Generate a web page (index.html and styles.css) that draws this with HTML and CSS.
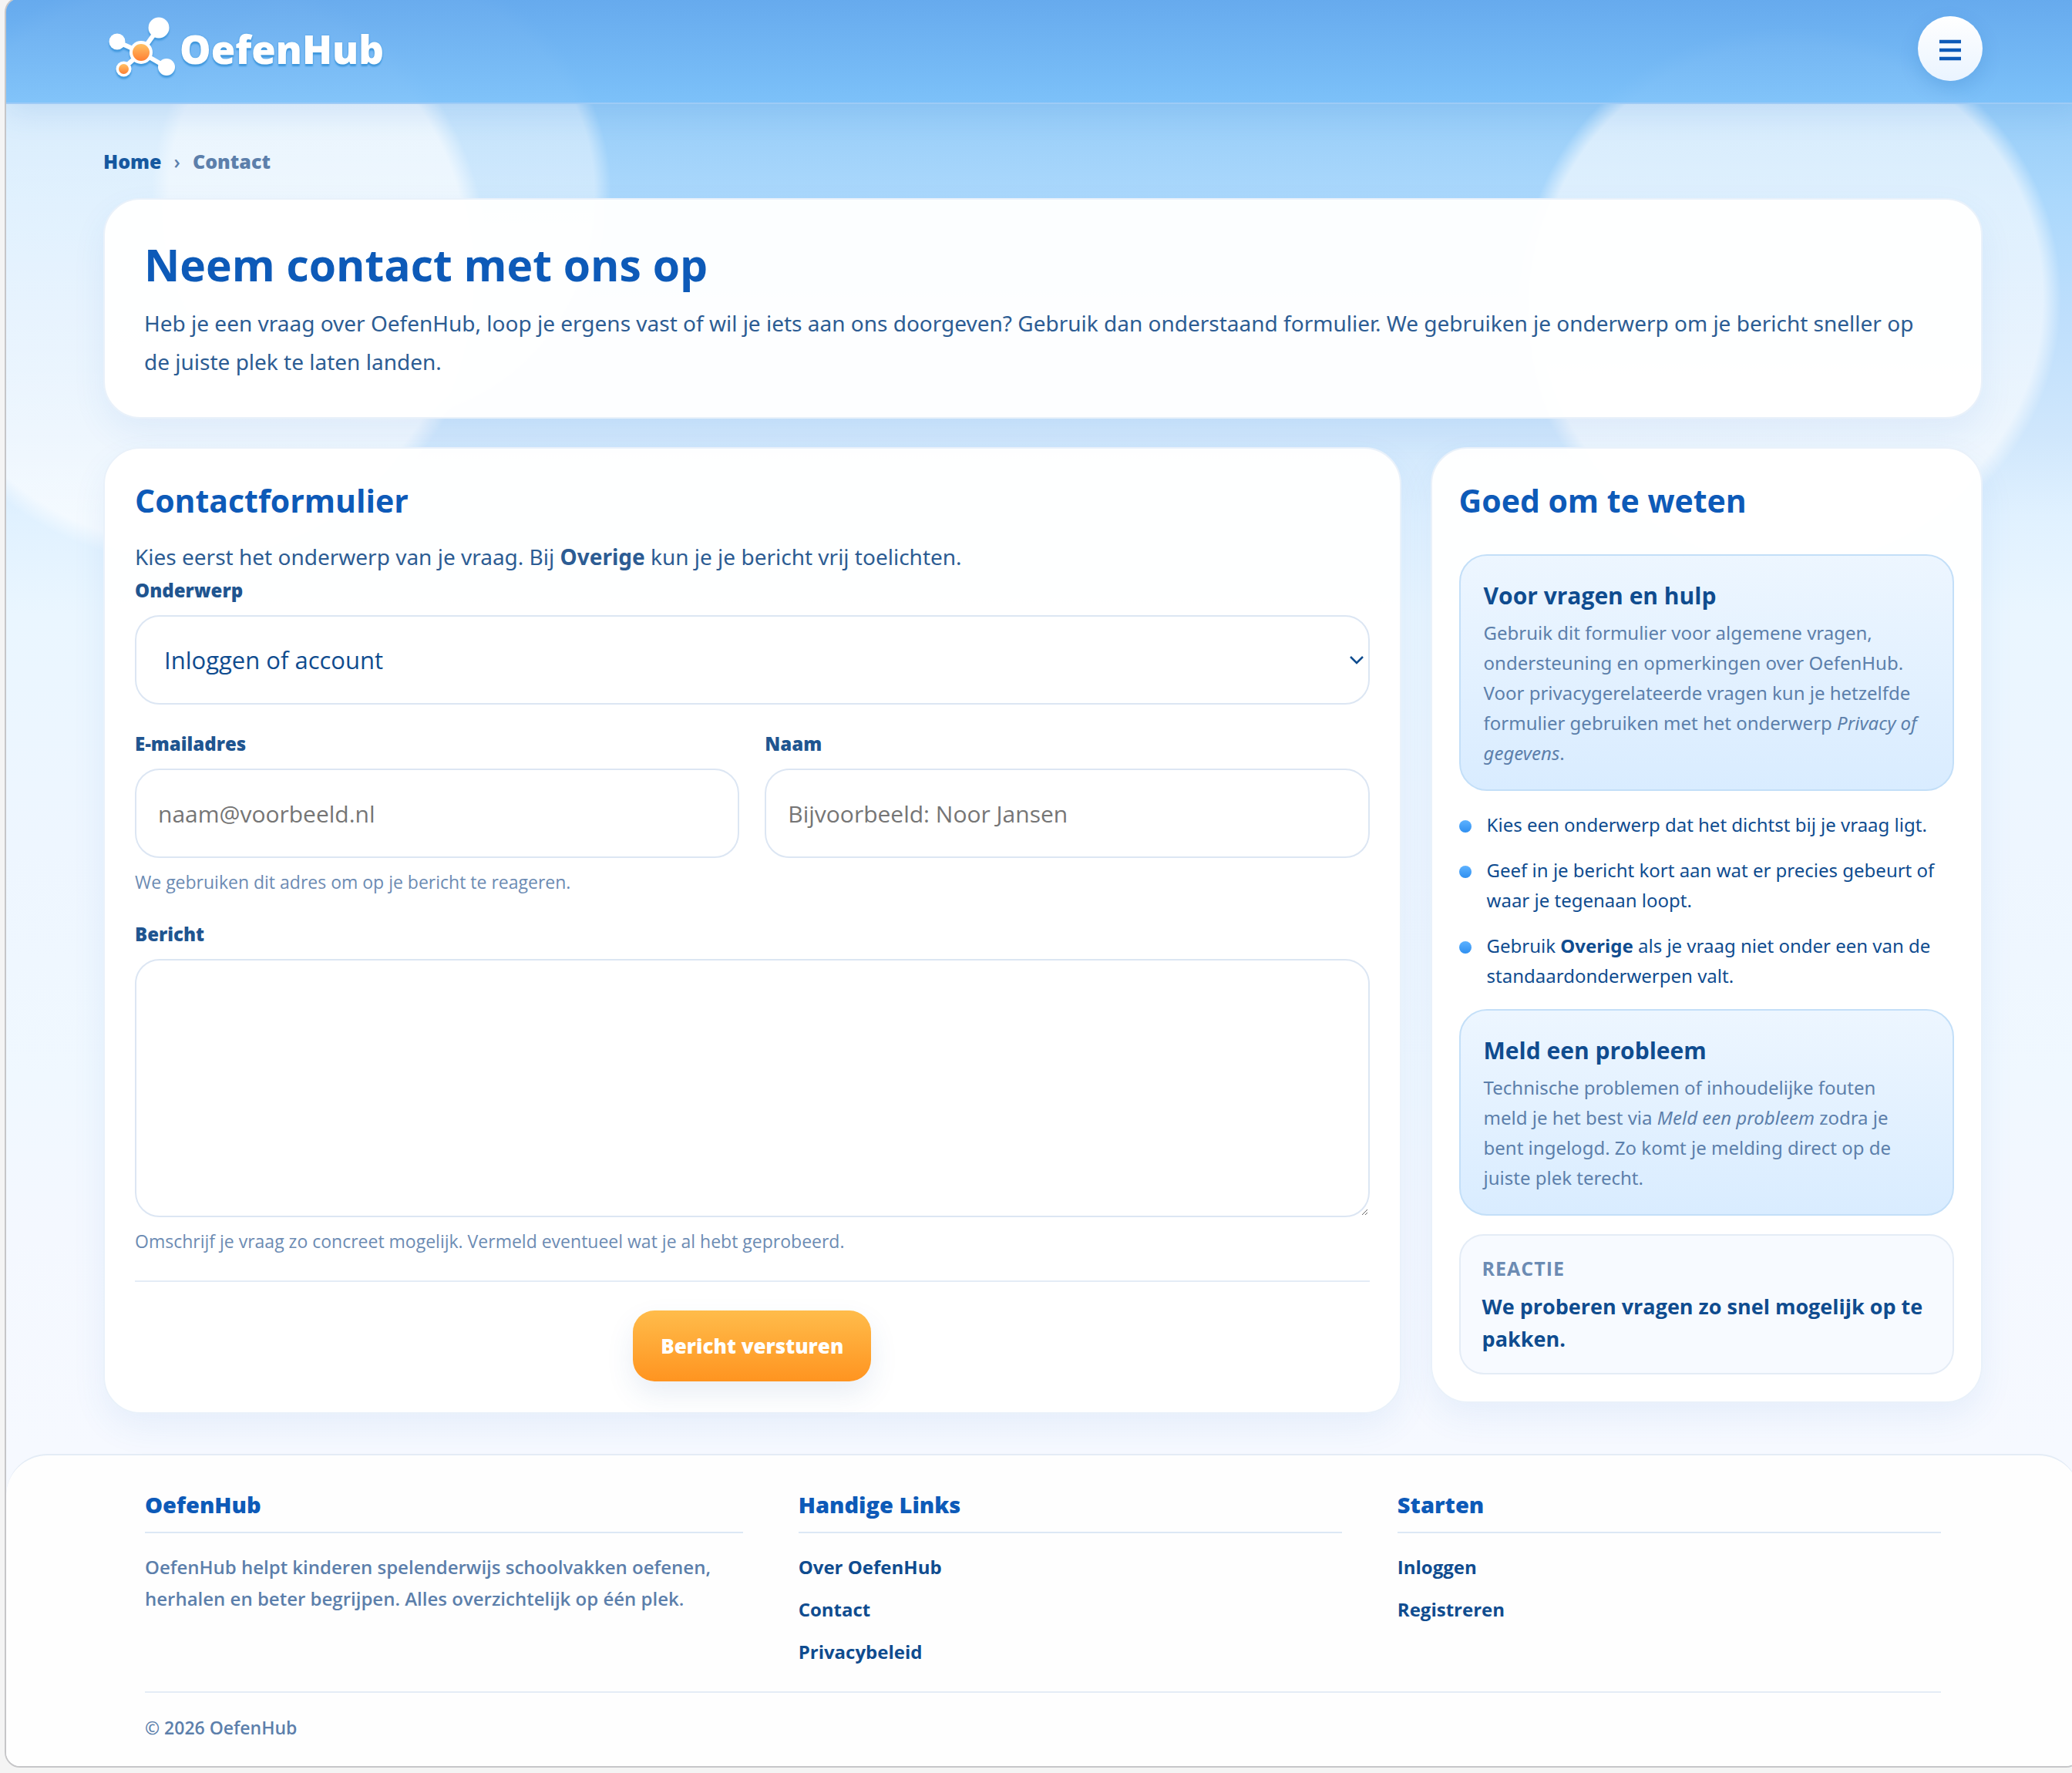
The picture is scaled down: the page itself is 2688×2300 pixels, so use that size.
FILE: index.html
```html
<!DOCTYPE html>
<html lang="nl">
<head>
  <meta charset="utf-8">
  <meta name="viewport" content="width=device-width, initial-scale=1">
  <title>Contact - OefenHub</title>
  <link rel="stylesheet" href="styles.css">
</head>
<body>
  <div class="page">
    <!-- Header with logo and menu button -->
    <header class="site-header">
      <a class="logo" href="#">
        <svg class="logo-mark" viewBox="0 0 90 84" aria-hidden="true">
          <defs>
            <linearGradient id="orange" x1="0" y1="0" x2="0" y2="1">
              <stop offset="0" stop-color="#ffc266"/>
              <stop offset="1" stop-color="#ff7f32"/>
            </linearGradient>
          </defs>
          <g stroke="#fff" stroke-width="6" stroke-linecap="round">
            <path d="M43 47 66 15M43 47 12 33M43 47 76 66M43 47 20 68"/>
          </g>
          <g fill="#fff">
            <circle cx="66" cy="15" r="13.5"/>
            <circle cx="12" cy="33" r="10.5"/>
            <circle cx="76" cy="66" r="11"/>
            <circle cx="20.5" cy="68.5" r="10"/>
            <circle cx="43" cy="47" r="15"/>
          </g>
          <circle cx="43" cy="47" r="11" fill="url(#orange)"/>
          <circle cx="20.5" cy="68.5" r="6.5" fill="url(#orange)"/>
        </svg>
        <span class="logo-text">OefenHub</span>
      </a>
      <button class="menu-btn" type="button" aria-label="Menu openen">
        <svg viewBox="0 0 28 28" aria-hidden="true">
          <path d="M0 5h28M0 16h28M0 27h28" stroke="currentColor" stroke-width="4.5"/>
        </svg>
      </button>
    </header>

    <main class="content">
      <nav class="breadcrumb" aria-label="Kruimelpad">
        <a href="#">Home</a>
        <span class="sep">›</span>
        <span>Contact</span>
      </nav>

      <section class="card hero">
        <h1>Neem contact met ons op</h1>
        <p>Heb je een vraag over OefenHub, loop je ergens vast of wil je iets aan ons doorgeven? Gebruik dan onderstaand formulier. We gebruiken je onderwerp om je bericht sneller op de juiste plek te laten landen.</p>
      </section>

      <div class="columns">
        <!-- Contact form -->
        <section class="card form-card">
          <h2>Contactformulier</h2>
          <p class="intro">Kies eerst het onderwerp van je vraag. Bij <strong>Overige</strong> kun je je bericht vrij toelichten.</p>
          <form>
            <div class="field">
              <label for="subject">Onderwerp</label>
              <select id="subject">
                <option>Inloggen of account</option>
              </select>
            </div>
            <div class="field-row">
              <div class="field">
                <label for="email">E-mailadres</label>
                <input type="email" id="email" placeholder="naam@voorbeeld.nl">
                <p class="hint">We gebruiken dit adres om op je bericht te reageren.</p>
              </div>
              <div class="field">
                <label for="name">Naam</label>
                <input type="text" id="name" placeholder="Bijvoorbeeld: Noor Jansen">
              </div>
            </div>
            <div class="field">
              <label for="message">Bericht</label>
              <textarea id="message"></textarea>
              <p class="hint">Omschrijf je vraag zo concreet mogelijk. Vermeld eventueel wat je al hebt geprobeerd.</p>
            </div>
            <div class="actions">
              <button class="btn-send" type="submit">Bericht versturen</button>
            </div>
          </form>
        </section>

        <!-- Extra info next to the form -->
        <aside class="card side-card">
          <h2>Goed om te weten</h2>
          <div class="info-box">
            <h3>Voor vragen en hulp</h3>
            <p>Gebruik dit formulier voor algemene vragen, ondersteuning en opmerkingen over OefenHub. Voor privacygerelateerde vragen kun je hetzelfde formulier gebruiken met het onderwerp <em>Privacy of gegevens</em>.</p>
          </div>
          <ul class="tips">
            <li>Kies een onderwerp dat het dichtst bij je vraag ligt.</li>
            <li>Geef in je bericht kort aan wat er precies gebeurt of waar je tegenaan loopt.</li>
            <li>Gebruik <strong>Overige</strong> als je vraag niet onder een van de standaardonderwerpen valt.</li>
          </ul>
          <div class="info-box">
            <h3>Meld een probleem</h3>
            <p>Technische problemen of inhoudelijke fouten meld je het best via <em>Meld een probleem</em> zodra je bent ingelogd. Zo komt je melding direct op de juiste plek terecht.</p>
          </div>
          <div class="reply-box">
            <span class="reply-label">Reactie</span>
            <p>We proberen vragen zo snel mogelijk op te pakken.</p>
          </div>
        </aside>
      </div>
    </main>

    <footer class="site-footer">
      <div class="footer-columns">
        <div>
          <h4>OefenHub</h4>
          <p>OefenHub helpt kinderen spelenderwijs schoolvakken oefenen, herhalen en beter begrijpen. Alles overzichtelijk op één plek.</p>
        </div>
        <div>
          <h4>Handige Links</h4>
          <ul>
            <li><a href="#">Over OefenHub</a></li>
            <li><a href="#">Contact</a></li>
            <li><a href="#">Privacybeleid</a></li>
          </ul>
        </div>
        <div>
          <h4>Starten</h4>
          <ul>
            <li><a href="#">Inloggen</a></li>
            <li><a href="#">Registreren</a></li>
          </ul>
        </div>
      </div>
      <p class="copyright">© 2026 OefenHub</p>
    </footer>
  </div>
</body>
</html>
```

FILE: styles.css
```css
* {
  box-sizing: border-box;
}
body {
  margin: 0;
  background: #f4f4f4;
  color: #0f4c8f;
  font-family: 'Segoe UI', 'Open Sans', sans-serif;
  overflow-x: hidden;
}
h1, h2, h3, h4, p, ul {
  margin: 0;
  padding: 0;
}
ul {
  list-style: none;
}
a {
  color: inherit;
  text-decoration: none;
}
.page {
  margin: -4px -12px 0 6px;
  border: 2px solid #c6c6c8;
  border-radius: 20px;
  overflow: hidden;
  /* Soft clouds over the sky gradient */
  background:
    radial-gradient(circle at 237px 346px, rgba(255,255,255,0.64) 362px, transparent 388px),
    radial-gradient(circle at 487px 253px, rgba(255,255,255,0.44) 276px, transparent 298px),
    radial-gradient(circle at calc(100% - 376px) 388px, rgba(255,255,255,0.61) 328px, transparent 352px),
    linear-gradient(#7cbcf5 0, #97cdf8 140px, #abd8fc 260px, #bfdffc 420px, #d0e7fc 570px, #e0f1ff 670px, #eaf6ff 800px, #eef6ff 1100px, #f0f8ff 1400px, #f4f8ff 1600px, #f6f9ff 1880px);
}

/* Header */
.site-header {
  display: flex;
  justify-content: space-between;
  align-items: center;
  padding: 23px 126px 28px;
  background: linear-gradient(rgba(101,169,237,0.95), rgba(122,192,249,0.92));
  border-bottom: 2px solid #9ecbf6;
  box-shadow: 0 12px 36px rgba(60,130,210,0.14);
}
.logo {
  display: flex;
  align-items: center;
  gap: 3px;
  padding-left: 6px;
}
.logo-mark {
  width: 90px;
  height: 84px;
  filter: drop-shadow(0 3px 1px #3f97dc);
}
.logo-text {
  font-family: 'Open Sans', sans-serif;
  font-size: 51px;
  font-weight: 800;
  line-height: 84px;
  color: #fff;
  text-shadow: 0 3px 2px #3f97dc, 0 0 2px #3f97dc;
}
.menu-btn {
  display: flex;
  justify-content: center;
  align-items: center;
  width: 84px;
  height: 84px;
  border: none;
  border-radius: 50%;
  background: linear-gradient(#fff, #eaf4ff);
  color: #0d5ab8;
  box-shadow: 0 10px 26px rgba(20,90,170,0.16);
  cursor: pointer;
}
.menu-btn svg {
  width: 28px;
  height: 28px;
  overflow: visible;
}

.content {
  padding: 56px 126px 52px;
}
.breadcrumb {
  display: flex;
  align-items: center;
  gap: 16px;
  margin-bottom: 30px;
  font-size: 25px;
  font-weight: 800;
  line-height: 36px;
  color: #5c7fab;
}
.breadcrumb a {
  color: #16589f;
}
.sep {
  font-weight: 600;
}

/* Cards */
.card {
  background: rgba(255,255,255,0.96);
  border: 2px solid #e9f1fa;
  border-radius: 48px;
  box-shadow: 0 18px 44px rgba(50,120,200,0.08);
}
.hero {
  padding: 51px 51px 47px;
  margin-bottom: 37px;
}
.hero h1 {
  margin-bottom: 18px;
  font-size: 57px;
  line-height: 66px;
  color: #0d5ab8;
}
.hero p, .intro {
  font-family: 'Segoe UI', 'Noto Sans', sans-serif;
  font-size: 28px;
  line-height: 50px;
  color: #2c5c93;
}
.columns {
  display: grid;
  grid-template-columns: 47fr 20fr;
  gap: 38px;
  align-items: start;
}
.card h2 {
  font-size: 41px;
  line-height: 58px;
  color: #0d5ab8;
}

/* Form */
.form-card {
  padding: 38px 39px 40px;
}
.intro {
  margin-top: 19px;
}
form {
  display: flex;
  flex-direction: column;
  gap: 32px;
}
.field-row {
  display: grid;
  grid-template-columns: 1fr 1fr;
  gap: 33px;
}
.field label {
  display: block;
  margin-bottom: 13px;
  font-size: 24px;
  font-weight: 800;
  line-height: 38px;
  color: #1f5590;
}
.field input, .field select, .field textarea {
  display: block;
  width: 100%;
  height: 116px;
  padding: 0 28px;
  border: 2px solid #dce6f3;
  border-radius: 32px;
  background: #fff;
  font-family: inherit;
  font-size: 30px;
  color: #0f4c8f;
}
.field select {
  appearance: none;
  padding-left: 36px;
  background: #fff url("data:image/svg+xml,%3Csvg xmlns='http://www.w3.org/2000/svg' width='18' height='12' viewBox='0 0 18 12'%3E%3Cpath d='M1 2l8 8 8-8' fill='none' stroke='%230f4c8f' stroke-width='2.5'/%3E%3C/svg%3E") no-repeat right 6px center;
  font-size: 31px;
}
.field textarea {
  height: 335px;
  padding: 28px;
  resize: vertical;
}
.field input::placeholder {
  color: #757575;
}
.hint {
  margin-top: 14px;
  font-size: 23px;
  line-height: 34px;
  color: #6c8bb3;
}
.actions {
  margin-top: 2px;
  padding-top: 37px;
  border-top: 2px solid #e4ecf6;
  text-align: center;
}
.btn-send {
  height: 92px;
  padding: 0 36px;
  border: none;
  border-radius: 28px;
  background: linear-gradient(#ffbc4b, #ff9420);
  box-shadow: 0 16px 36px rgba(40,90,160,0.1);
  color: #fff;
  font-family: inherit;
  font-size: 26px;
  font-weight: 800;
  vertical-align: top;
  cursor: pointer;
}

/* Side column */
.side-card {
  display: flex;
  flex-direction: column;
  gap: 24px;
  padding: 38px 35px 35px;
}
.side-card h2 {
  margin-bottom: 17px;
}
.info-box {
  padding: 28px 44px 28px 30px;
  border: 2px solid #c3dff8;
  border-radius: 36px;
  background: linear-gradient(#edf6ff, #d9ecff);
}
.info-box h3 {
  margin-bottom: 4px;
  font-size: 30px;
  line-height: 48px;
  color: #0f4c8f;
}
.info-box p, .tips {
  font-family: 'Segoe UI', 'Noto Sans', sans-serif;
  font-size: 24px;
  line-height: 39px;
}
.info-box p {
  color: #5c7fab;
}
.tips {
  display: flex;
  flex-direction: column;
  gap: 20px;
}
.tips li {
  position: relative;
  padding-left: 36px;
}
.tips li::before {
  content: '';
  position: absolute;
  top: 14px;
  left: 0;
  width: 16px;
  height: 16px;
  border-radius: 50%;
  background: linear-gradient(#5db2ff, #2f8ff0);
}
.reply-box {
  padding: 23px 28px;
  border: 2px solid #e4ecf6;
  border-radius: 32px;
  background: #f7faff;
}
.reply-label {
  display: block;
  margin-bottom: 10px;
  font-size: 25px;
  font-weight: 700;
  line-height: 38px;
  letter-spacing: 1px;
  text-transform: uppercase;
  color: #6c8bb3;
}
.reply-box p {
  font-size: 27px;
  font-weight: 700;
  line-height: 42px;
}

/* Footer */
.site-footer {
  padding: 44px 180px 31px;
  border-top: 2px solid #e4ecf6;
  border-radius: 54px 54px 0 0;
  background: #fefefe;
}
.footer-columns {
  display: grid;
  grid-template-columns: 11fr 10fr 10fr;
  gap: 72px;
  padding-bottom: 31px;
  border-bottom: 2px solid #e4ecf6;
}
.footer-columns h4 {
  margin-bottom: 23px;
  padding-bottom: 15px;
  border-bottom: 2px solid #dce8f5;
  font-size: 29px;
  font-weight: 800;
  line-height: 40px;
  color: #0d5ab8;
}
.footer-columns p {
  font-size: 24px;
  font-weight: 600;
  line-height: 41px;
  color: #5c7fab;
}
.footer-columns ul {
  display: flex;
  flex-direction: column;
  gap: 14px;
  font-size: 24px;
  font-weight: 700;
  line-height: 41px;
}
.copyright {
  padding-top: 26px;
  font-size: 23px;
  font-weight: 600;
  line-height: 38px;
  color: #5c7fab;
}
```
